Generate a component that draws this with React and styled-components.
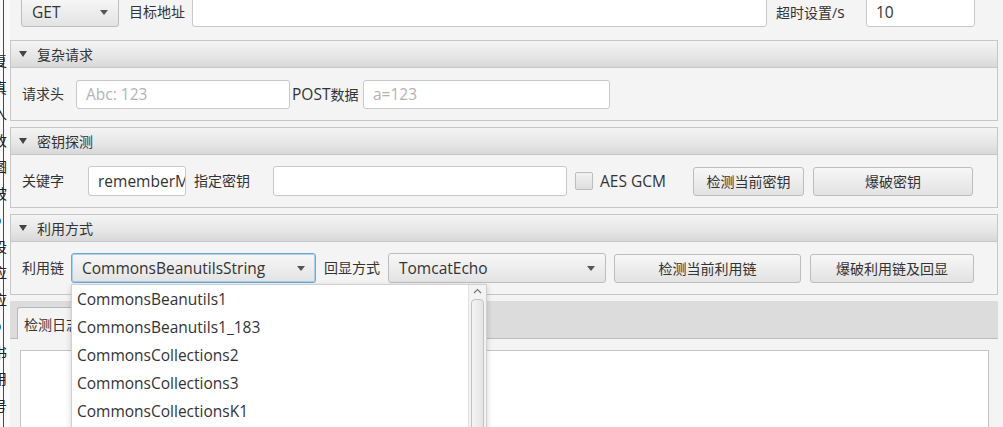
import React from 'react';
import styled, { createGlobalStyle } from 'styled-components';

const GlobalStyle = createGlobalStyle`
  html, body { margin:0; padding:0; }
  body {
    background:#f4f4f4;
    font-family:"Open Sans","Noto Sans CJK SC",sans-serif;
    color:#333;
    overflow:hidden;
  }
  #root { width:1003px; height:427px; overflow:hidden; }
`;

const Window = styled.div`
display:flex;
width:1003px;
height:427px;
overflow:hidden;
background:#f4f4f4;
`;

// sliver of the window behind, on the far left
const Strip = styled.div`
width:10px;
flex:none;
overflow:hidden;
background:linear-gradient(to right,#fafafa 0 3px,#4a4a4a 3px 4px,#fafafa 4px);
`;
const StripText = styled.div`
margin-left:-7px;
padding-top:47px;
display:flex;
flex-direction:column;
font-family:"Noto Sans CJK SC",sans-serif;
font-size:14px;
line-height:26.5px;
`;
const Glyph = styled.span`
color:${p => (p.$blue ? '#1d4d9c' : '#222')};
`;

const Main = styled.div`
width:988px;
flex:none;
display:flex;
flex-direction:column;
`;

const TopRow = styled.div`
height:40px;
flex:none;
display:flex;
align-items:flex-start;
padding-left:11px;
box-sizing:border-box;
& > * { margin-top:-3px; }
`;

const Label = styled.span`
width:${p => p.$w}px;
margin-left:${p => p.$ml || 0}px;
flex:none;
font-size:14px;
line-height:30px;
white-space:nowrap;
color:#333;
`;
const Latin = styled.span`
font-size:15.5px;
`;

const TextInput = styled.input`
width:${p => p.$w}px;
height:${p => p.$h || 30}px;
flex:none;
box-sizing:border-box;
border:1px solid #c9c9c9;
border-radius:3px;
background:#fff;
padding:0 ${p => (p.$pr === undefined ? 9 : p.$pr)}px 0 9px;
font-family:"Open Sans","Noto Sans CJK SC",sans-serif;
font-size:15.5px;
color:#333;
outline:none;
&::placeholder { color:#b3b3b3; }
`;

const ComboWrap = styled.div`
position:relative;
flex:none;
`;
const Combo = styled.div`
width:${p => p.$w}px;
height:30px;
box-sizing:border-box;
display:flex;
align-items:center;
justify-content:space-between;
padding:0 10px;
border:1px solid ${p => (p.$focus ? '#6aa8d6' : '#bdbdbd')};
box-shadow:${p => (p.$focus ? 'inset 0 0 0 1px #a9d0ec' : 'none')};
border-radius:3px;
background:linear-gradient(#f7f7f7,#e3e3e3);
font-size:15.5px;
color:#333;
`;
const Arrow = styled.span`
width:0;
height:0;
border-left:4px solid transparent;
border-right:4px solid transparent;
border-top:5px solid #555;
`;

const Button = styled.div`
width:${p => p.$w}px;
height:29px;
margin-left:${p => p.$ml || 0}px;
flex:none;
box-sizing:border-box;
display:flex;
align-items:center;
justify-content:center;
border:1px solid #bdbdbd;
border-radius:3px;
background:linear-gradient(#f7f7f7,#e2e2e2);
font-size:14px;
color:#333;
`;

const Check = styled.div`
width:18px;
height:18px;
margin-left:8px;
flex:none;
box-sizing:border-box;
border:1px solid #bcbcbc;
border-radius:2px;
background:linear-gradient(#f2f2f2,#dedede);
`;

const Pane = styled.section`
margin-bottom:6px;
flex:none;
`;
const PaneHeader = styled.div`
height:28px;
box-sizing:border-box;
border:1px solid #c6c6c6;
background:linear-gradient(#f4f4f4 0%,#e6e6e6 60%,#d8d8d8 100%);
display:flex;
align-items:center;
padding-left:8px;
gap:10px;
font-size:14px;
color:#333;
`;
const HeaderArrow = styled.span`
width:0;
height:0;
border-left:4.5px solid transparent;
border-right:4.5px solid transparent;
border-top:6px solid #444;
`;
const PaneBody = styled.div`
height:53px;
box-sizing:border-box;
border:1px solid #c6c6c6;
border-top:none;
display:flex;
align-items:center;
padding-left:11px;
background:#f4f4f4;
`;

const TabPane = styled.div`
flex:1;
display:flex;
flex-direction:column;
min-height:0;
`;
const TabBar = styled.div`
height:38px;
flex:none;
box-sizing:border-box;
background:#dcdcdc;
border-bottom:1px solid #bcbcbc;
display:flex;
align-items:flex-end;
padding-left:7px;
`;
const Tab = styled.div`
width:80px;
height:32px;
margin-bottom:-1px;
box-sizing:border-box;
background:#f4f4f4;
border:1px solid #b8b8b8;
border-bottom:none;
border-radius:3px 3px 0 0;
padding-left:6px;
font-size:14px;
line-height:34px;
color:#333;
`;
const TabBody = styled.div`
flex:1;
padding:11px 9px 0 10px;
`;
const LogArea = styled.div`
height:100%;
box-sizing:border-box;
background:#fff;
border:1px solid #c4c4c4;
border-bottom:none;
`;

const Popup = styled.div`
position:absolute;
top:calc(100% + 1px);
left:0;
width:416px;
height:170px;
box-sizing:border-box;
background:#fff;
border:1px solid #d0d0d0;
box-shadow:0 2px 6px rgba(0,0,0,0.18);
z-index:5;
`;
const Item = styled.div`
height:28px;
line-height:28px;
padding-left:5px;
font-size:15.5px;
color:#333;
white-space:nowrap;
`;
const ScrollBar = styled.div`
position:absolute;
top:0;
right:0;
bottom:0;
width:17px;
background:#f3f3f3;
border-left:1px solid #e2e2e2;
`;
const UpChevron = styled.svg`
position:absolute;
top:3px;
left:4px;
`;
const Thumb = styled.div`
position:absolute;
top:14px;
left:2px;
right:2px;
bottom:0;
border:1px solid #c2c2c2;
border-radius:4px;
background:linear-gradient(to right,#f4f4f4,#e4e4e4);
`;

const strip = [
  ['复'], ['真'], ['入'], ['改'], ['图'], ['被'], ['o', true], ['设'],
  ['应'], ['应'], ['o', true], ['书'], ['用'], ['号'],
];

const chains = [
  'CommonsBeanutils1',
  'CommonsBeanutils1_183',
  'CommonsCollections2',
  'CommonsCollections3',
  'CommonsCollectionsK1',
  'CommonsCollectionsK2',
];

const App = () => {
  return (
    <Window>
      <GlobalStyle />
      <Strip>
        <StripText>
          {strip.map(([c, blue], i) => <Glyph key={i} $blue={blue}>{c}</Glyph>)}
        </StripText>
      </Strip>
      <Main>
        <TopRow>
          <ComboWrap>
            <Combo $w={98}>GET<Arrow /></Combo>
          </ComboWrap>
          <Label $w={63} $ml={10}>目标地址</Label>
          <TextInput $w={575} readOnly value="" />
          <Label $w={90} $ml={9}>超时设置/<Latin>s</Latin></Label>
          <TextInput $w={109} readOnly value="10" />
        </TopRow>

        <Pane>
          <PaneHeader><HeaderArrow />复杂请求</PaneHeader>
          <PaneBody>
            <Label $w={54}>请求头</Label>
            <TextInput $w={214} $h={29} readOnly placeholder="Abc: 123" />
            <Label $w={71} $ml={2}><Latin>POST</Latin>数据</Label>
            <TextInput $w={247} $h={29} readOnly placeholder="a=123" />
          </PaneBody>
        </Pane>

        <Pane>
          <PaneHeader><HeaderArrow />密钥探测</PaneHeader>
          <PaneBody>
            <Label $w={66}>关键字</Label>
            <TextInput $w={98} $pr={0} readOnly value="rememberMe" />
            <Label $w={79} $ml={8}>指定密钥</Label>
            <TextInput $w={294} readOnly value="" />
            <Check />
            <Label $w={93} $ml={7}><Latin>AES GCM</Latin></Label>
            <Button $w={111}>检测当前密钥</Button>
            <Button $w={160} $ml={9}>爆破密钥</Button>
          </PaneBody>
        </Pane>

        <Pane>
          <PaneHeader><HeaderArrow />利用方式</PaneHeader>
          <PaneBody>
            <Label $w={49}>利用链</Label>
            <ComboWrap>
              <Combo $w={245} $focus>CommonsBeanutilsString<Arrow /></Combo>
              <Popup>
                {chains.map(c => <Item key={c}>{c}</Item>)}
                <ScrollBar>
                  <UpChevron width="9" height="6" viewBox="0 0 9 6">
                    <path d="M1 5 L4.5 1.5 L8 5" fill="none" stroke="#777" strokeWidth="1.2" />
                  </UpChevron>
                  <Thumb />
                </ScrollBar>
              </Popup>
            </ComboWrap>
            <Label $w={64} $ml={8}>回显方式</Label>
            <ComboWrap>
              <Combo $w={218}>TomcatEcho<Arrow /></Combo>
            </ComboWrap>
            <Button $w={187} $ml={8}>检测当前利用链</Button>
            <Button $w={164} $ml={9}>爆破利用链及回显</Button>
          </PaneBody>
        </Pane>

        <TabPane>
          <TabBar>
            <Tab>检测日志</Tab>
          </TabBar>
          <TabBody>
            <LogArea />
          </TabBody>
        </TabPane>
      </Main>
    </Window>
  );
};

export default App;
